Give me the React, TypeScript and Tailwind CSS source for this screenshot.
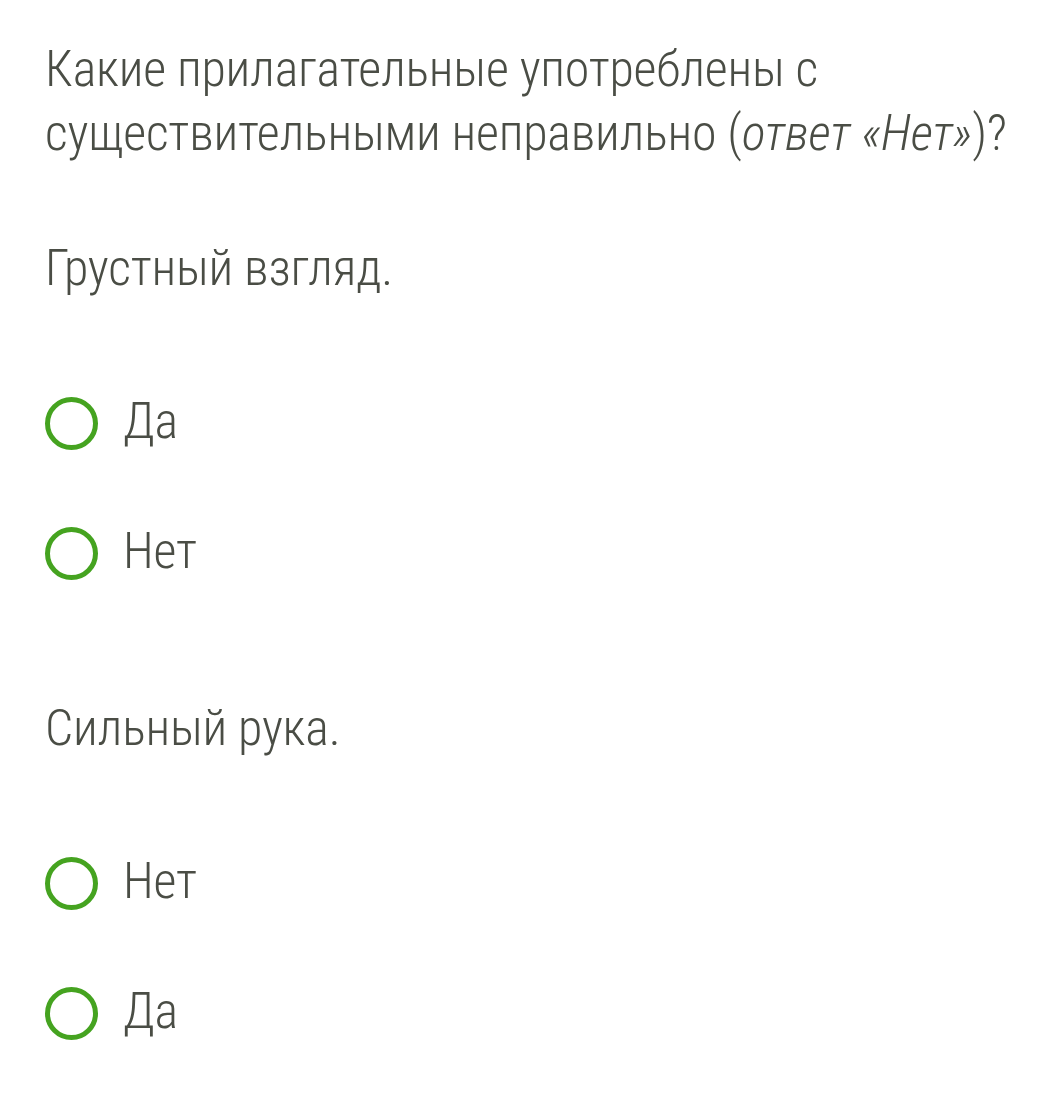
import React from "react";

const Option = ({ label }: { label: string }) => (
  <div className="flex items-center h-[130px]">
    <div className="w-[53px] h-[53px] rounded-full border-[5px] border-[#45a320] shrink-0" />
    <span className="ml-[25px] pb-[4px] text-[50px] leading-[50px] tracking-[-0.2px]">{label}</span>
  </div>
);

export default function App() {
  return (
    <div
      className="w-[1039px] h-[1110px] bg-white text-[#4a4d45] pl-[45px] pt-[37px]"
      style={{ fontFamily: "Roboto, sans-serif", fontWeight: 300, fontStretch: "condensed" }}
    >
      <p className="text-[50px] leading-[64px] tracking-[-0.2px]">
        Какие прилагательные употреблены с существительными неправильно (<i>ответ «Нет»</i>)?
      </p>
      <p className="text-[50px] leading-[64px] tracking-[-0.2px] mt-[71px]">Грустный взгляд.</p>
      <div className="mt-[58px]">
        <Option label="Да" />
        <Option label="Нет" />
      </div>
      <p className="text-[50px] leading-[64px] tracking-[-0.2px] mt-[78px]">Сильный рука.</p>
      <div className="mt-[58px]">
        <Option label="Нет" />
        <Option label="Да" />
      </div>
    </div>
  );
}
